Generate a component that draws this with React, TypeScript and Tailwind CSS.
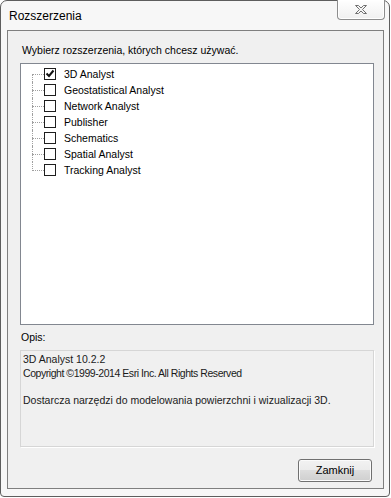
const extensions = [
  { name: '3D Analyst', checked: true },
  { name: 'Geostatistical Analyst', checked: false },
  { name: 'Network Analyst', checked: false },
  { name: 'Publisher', checked: false },
  { name: 'Schematics', checked: false },
  { name: 'Spatial Analyst', checked: false },
  { name: 'Tracking Analyst', checked: false },
];

function CloseGlyph() {
  return (
    <svg width="14" height="11" viewBox="0 0 14 11">
      <path
        d="M1.5 1.5 H4.5 L7 4 L9.5 1.5 H12.5 L8.5 5.5 L12.5 9.5 H9.5 L7 7 L4.5 9.5 H1.5 L5.5 5.5 Z"
        fill="#f4f4f4"
        stroke="#6f6f6f"
        strokeWidth="1"
        strokeLinejoin="round"
      />
    </svg>
  );
}

function CheckMark() {
  return (
    <svg width="10" height="10" viewBox="0 0 10 10">
      <path d="M1.5 4.5 L4 7 L8.5 1.5" fill="none" stroke="#111" strokeWidth="2" />
    </svg>
  );
}

export default function App() {
  const last = extensions.length - 1;

  return (
    <div className="w-[391px] h-[498px] bg-white" style={{ fontFamily: '"Liberation Sans", Arial, sans-serif' }}>
      <div className="w-[390px] h-[497px] flex flex-col border border-[#5e5e5e] rounded-t-[7px] rounded-b-[4px] bg-[#f7f7f7] pl-[6px] pr-[5px] pb-[7px]">
        {/* title bar */}
        <div className="h-[29px] flex items-start justify-between shrink-0">
          <span className="pl-[2px] mt-[8px] text-[12px] leading-[15px] text-black">Rozszerzenia</span>
          <button className="-mt-px -mr-px w-[48px] h-[20px] flex items-center justify-center border border-t-0 border-[#8d8d8d] rounded-b-[4px] bg-[linear-gradient(to_bottom,#ffffff,#f0f0f0)] shadow-[inset_0_0_0_1px_#ffffff]">
            <CloseGlyph />
          </button>
        </div>

        {/* client area */}
        <div className="flex-1 flex flex-col border border-[#7f7f7f] bg-[#f0f0f0] pl-[12px] pr-[9px] pt-[12px] text-[10.5px] leading-[13px] text-black">
          <div className="pl-[2px] h-[13px] mt-px">Wybierz rozszerzenia, których chcesz używać.</div>

          <div className="mt-[6px] h-[262px] border border-[#828790] bg-white pt-[2px]">
            {extensions.map((ext, i) => (
              <div key={ext.name} className="flex h-[16px] items-center">
                <div className="relative ml-[11px] h-full w-[12px]">
                  <div
                    className={
                      i === 0
                        ? 'absolute left-0 top-[8px] bottom-0 border-l border-dotted border-[#a0a0a0]'
                        : i === last
                          ? 'absolute left-0 top-0 h-[9px] border-l border-dotted border-[#a0a0a0]'
                          : 'absolute left-0 top-0 bottom-0 border-l border-dotted border-[#a0a0a0]'
                    }
                  />
                  <div className="absolute left-0 right-0 top-[8px] border-t border-dotted border-[#a0a0a0]" />
                </div>
                <div className="w-[12px] h-[12px] flex items-center justify-center border border-[#1e1e1e] bg-white">
                  {ext.checked && <CheckMark />}
                </div>
                <span className="ml-[8px] whitespace-nowrap">{ext.name}</span>
              </div>
            ))}
          </div>

          <div className="mt-[6px] pl-[1px] h-[13px]">Opis:</div>

          <div className="mt-[6px] h-[97px] border border-[#d6d6d6] shadow-[1px_1px_0_#ffffff] bg-[#f0f0f0] px-[2px] pt-[2px] leading-[13.5px] text-[#1a1a1a]">
            <div>3D Analyst 10.2.2</div>
            <div className="tracking-[-0.45px]">Copyright ©1999-2014 Esri Inc. All Rights Reserved</div>
            <div>&nbsp;</div>
            <div>Dostarcza narzędzi do modelowania powierzchni i wizualizacji 3D.</div>
          </div>

          <div className="mt-[12px] flex justify-end">
            <button className="mr-[2px] w-[74px] h-[23px] rounded-[3px] border border-[#707070] bg-[linear-gradient(to_bottom,#f2f2f2_0%,#ebebeb_50%,#dddddd_50%,#cfcfcf_100%)] shadow-[inset_0_0_0_1px_#fbfbfb] text-[11px] text-black">
              Zamknij
            </button>
          </div>
        </div>
      </div>
    </div>
  );
}
